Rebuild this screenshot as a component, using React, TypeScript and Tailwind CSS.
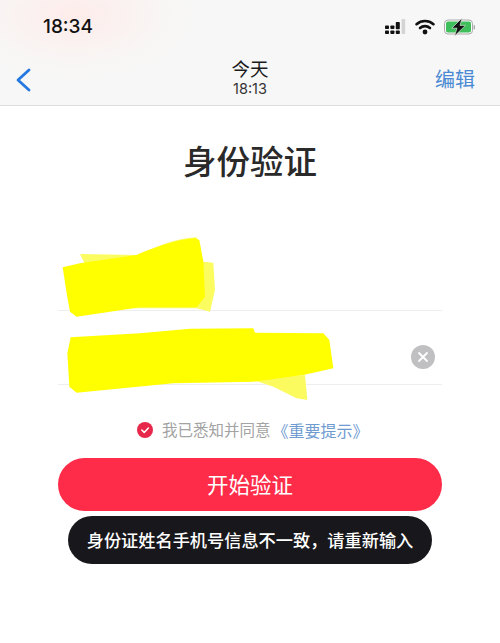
const cjk = "font-['Noto_Sans_CJK_SC','Liberation_Sans',sans-serif]";

const StatusIcons = () => (
  <svg width="90" height="18" viewBox="0 0 90 18" className="block">
    {/* signal */}
    <g fill="#111">
      <rect x="0" y="7.5" width="4" height="3.6" rx="0.8" />
      <rect x="0" y="12.4" width="4" height="3.6" rx="0.8" />
      <rect x="5.4" y="7.5" width="4" height="3.6" rx="0.8" />
      <rect x="5.4" y="12.4" width="4" height="3.6" rx="0.8" />
      <rect x="10.8" y="4" width="4" height="7.2" rx="0.8" />
      <rect x="10.8" y="12.4" width="4" height="3.6" rx="0.8" />
    </g>
    <rect x="16.6" y="1" width="3.6" height="15" rx="0.8" fill="#d4d4d4" />
    {/* wifi */}
    <g fill="none" stroke="#111" strokeLinecap="round">
      <path d="M31.5 6.2a13 13 0 0 1 17 0" strokeWidth="2.6" />
      <path d="M35 10a7.6 7.6 0 0 1 10 0" strokeWidth="2.6" />
    </g>
    <circle cx="40" cy="14" r="2.4" fill="#111" />
    {/* battery */}
    <rect x="59.5" y="2" width="28" height="14" rx="3.5" fill="#fafafa" stroke="#a9a9a9" />
    <rect x="61" y="3.5" width="25" height="11" rx="2" fill="#3fbe5c" />
    <rect x="88.6" y="7" width="1.4" height="4.4" rx="0.7" fill="#a9a9a9" />
    <path d="M77 0 L66.8 10.2 H72 L69.6 18 L80.4 7.4 H75 Z" fill="#111" stroke="#f3f7f3" strokeWidth="0.6" />
  </svg>
);

const Scribble1 = () => (
  <svg width="157" height="84" viewBox="60 45 471 252" className="absolute left-[2px] top-[6px] blur-[0.7px]">
    <path d="M120 102 L290 105 C340 85 400 55 470 52 L490 125 L520 128 L525 210 L510 275 L470 265 L200 265 Z" fill="#fbfc60" />
    <path d="M68 142 L120 130 L290 105 C340 85 400 60 465 55 L478 60 L490 125 L495 230 L470 262 L300 262 L110 290 L90 275 L80 220 Z" fill="#ffff00" />
  </svg>
);

const Scribble2 = () => (
  <svg width="270" height="75" viewBox="75 321 810 225" className="absolute left-[7px] top-[16px] blur-[0.7px]">
    <path d="M640 480 L795 465 L802 540 L770 535 L700 500 Z" fill="#fbfb60" />
    <path d="M92 352 L300 340 L450 326 L640 325 L645 338 L850 340 L868 360 L880 445 L790 465 L640 485 L400 490 L110 518 L88 500 L82 400 Z" fill="#ffff00" />
  </svg>
);

export default function App() {
  return (
    <div className={`w-[500px] h-[643px] bg-white overflow-hidden ${cjk}`}>
      <div className="h-[106px] border-b border-[#dcdcdc] bg-[radial-gradient(ellipse_130px_70px_at_75px_15px,#fdecea_0%,#f8f6f5_70%,#f7f7f7_100%)]">
        <div className="flex items-center justify-between pl-[43px] pr-[25px] h-[54px]">
          <span className="font-['Inter','Liberation_Sans',sans-serif] text-[19px] font-medium text-[#111]">18:34</span>
          <StatusIcons />
        </div>
        <div className="grid grid-cols-[1fr_auto_1fr] items-center pl-[15px] pr-[25px] h-[51px]">
          <svg width="16" height="24" viewBox="0 0 16 24" className="justify-self-start">
            <path d="M14 2 L3 12 L14 22" fill="none" stroke="#2478df" strokeWidth="2.8" strokeLinecap="round" strokeLinejoin="round" />
          </svg>
          <div className="flex flex-col items-center relative left-[5px] top-[-2px]">
            <span className="text-[18.5px] leading-[22px] text-[#1a1a1a]">今天</span>
            <span className="font-['Inter','Liberation_Sans',sans-serif] text-[14.5px] leading-[19px] text-[#333]">18:13</span>
          </div>
          <span className="justify-self-end text-[20px] leading-[26px] text-[#4a8ad4] relative top-[-1px]">编辑</span>
        </div>
      </div>

      <div className="flex flex-col items-center">
        <h1 className="mt-[30px] text-[33.5px] leading-[48px] font-medium text-[#2a2a2a]">身份验证</h1>

        <div className="w-[384px] mt-[45px]">
          <div className="relative h-[82px] border-b border-[#eeeeee]">
            <Scribble1 />
          </div>
          <div className="relative h-[74px] border-b border-[#eeeeee]">
            <Scribble2 />
            <div className="absolute right-[7px] top-[34px] w-[24px] h-[24px] rounded-full bg-[#c0c0c2] flex items-center justify-center">
              <svg width="12" height="12" viewBox="0 0 12 12">
                <path d="M2 2 L10 10 M10 2 L2 10" stroke="#fff" strokeWidth="1.8" strokeLinecap="round" />
              </svg>
            </div>
          </div>
        </div>

        <div className="self-start ml-[137px] flex items-center mt-[33px] h-[24px]">
          <div className="w-[16px] h-[16px] rounded-full bg-[#e8284a] flex items-center justify-center">
            <svg width="10" height="10" viewBox="0 0 10 10">
              <path d="M1.8 5 L4.2 7.4 L8.4 3" fill="none" stroke="#fff" strokeWidth="1.5" strokeLinecap="round" strokeLinejoin="round" />
            </svg>
          </div>
          <span className="ml-[9px] text-[15.5px] text-[#a3a3a3]">我已悉知并同意</span>
          <span className="ml-[2px] text-[16px] text-[#6f9bd1]">《重要提示》</span>
        </div>

        <button className="mt-[16px] w-[384px] h-[53px] rounded-full bg-[#fe2b49] text-white text-[21.5px] flex items-center justify-center">
          开始验证
        </button>

        <div className="mt-[5px] w-[364px] h-[48px] rounded-full bg-[#18171c] text-white text-[17.2px] font-medium flex items-center justify-center">
          身份证姓名手机号信息不一致，请重新输入
        </div>
      </div>
    </div>
  );
}
